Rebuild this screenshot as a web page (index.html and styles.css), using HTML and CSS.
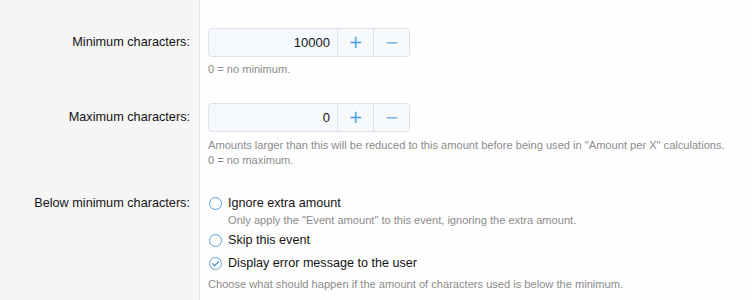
FILE: index.html
```html
<!DOCTYPE html>
<html lang="en">
<head>
    <meta charset="UTF-8">
    <title>Character options</title>
    <link rel="stylesheet" href="styles.css">
</head>
<body>

<div class="form">
    <div class="row row-min">
        <div class="label">Minimum characters:</div>
        <div class="field">
            <div class="spinner">
                <input class="num" type="text" value="10000">
                <button class="spin plus">+</button>
                <button class="spin minus">&minus;</button>
            </div>
            <p class="hint">0 = no minimum.</p>
        </div>
    </div>

    <div class="row row-max">
        <div class="label">Maximum characters:</div>
        <div class="field">
            <div class="spinner">
                <input class="num" type="text" value="0">
                <button class="spin plus">+</button>
                <button class="spin minus">&minus;</button>
            </div>
            <p class="hint long">Amounts larger than this will be reduced to this amount before being used in "Amount per X" calculations.<br>0 = no maximum.</p>
        </div>
    </div>

    <div class="row row-below">
        <div class="label radio-label">Below minimum characters:</div>
        <div class="field">
            <ul class="choices">
                <li class="choice">
                    <span class="radio"></span>Ignore extra amount
                </li>
                <li class="choice-hint">Only apply the "Event amount" to this event, ignoring the extra amount.</li>
                <li class="choice skip">
                    <span class="radio"></span>Skip this event
                </li>
                <li class="choice display">
                    <span class="radio checked">
                        <svg width="9" height="9" viewBox="0 0 9 9"><path d="M1.5 4.6 L3.7 6.7 L7.6 2.4" fill="none" stroke="#4a98d6" stroke-width="1.3" stroke-linecap="round" stroke-linejoin="round"/></svg>
                    </span>Display error message to the user
                </li>
            </ul>
            <p class="hint last">Choose what should happen if the amount of characters used is below the minimum.</p>
        </div>
    </div>
</div>

</body>
</html>
```

FILE: styles.css
```css
body {
    margin: 0;
    font-family: "Liberation Sans", Arial, sans-serif;
    background: #fefefe;
    color: #141414;
    overflow: hidden;
}

.form {
    width: 752px;
}

.row {
    display: flex;
}

.label {
    width: 190px;
    padding-right: 9px;
    flex-shrink: 0;
    text-align: right;
    font-size: 12.7px;
    line-height: 29px;
    background: #f5f5f5;
    border-right: 1px solid #e6e6e6;
}

.field {
    padding-left: 8px;
    flex: 1;
}

.row-min .label,
.row-min .field {
    padding-top: 28px;
    padding-bottom: 14px;
}

.row-max .label,
.row-max .field {
    padding-top: 13px;
    padding-bottom: 13px;
}

.row-below .label,
.row-below .field {
    padding-top: 13px;
    padding-bottom: 12px;
}

.radio-label {
    line-height: 18px;
}

.spinner {
    display: flex;
    width: 202px;
    height: 29px;
    box-sizing: border-box;
    border: 1px solid #dde2e8;
    border-radius: 4px;
    background: #f5f9fd;
    overflow: hidden;
}

.num {
    width: 128px;
    box-sizing: border-box;
    border: none;
    background: transparent;
    padding: 0 7px 0 0;
    text-align: right;
    font-family: "Liberation Sans", Arial, sans-serif;
    font-size: 13px;
    color: #141414;
    outline: none;
}

.spin {
    border: none;
    border-left: 1px solid #dde2e8;
    background: #f7fafd;
    padding: 0;
    font-family: "DejaVu Sans", sans-serif;
    font-size: 17px;
    line-height: 27px;
    color: #3f9fe6;
}

.plus {
    width: 36px;
}

.minus {
    width: 36px;
    color: #7db4e0;
}

.hint {
    margin: 5px 0 0;
    font-size: 11.1px;
    line-height: 14px;
    color: #8c8c8c;
}

.hint.long {
    margin-top: 6px;
    line-height: 15px;
}

.hint.last {
    margin-top: 5px;
}

.choices {
    list-style: none;
    margin: 0;
    padding: 0;
}

.choice {
    display: flex;
    align-items: center;
    font-size: 12.6px;
    line-height: 18px;
}

.choice.skip {
    margin-top: 4px;
}

.choice.display {
    margin-top: 5px;
}

.choice-hint {
    padding-left: 20px;
    margin-top: 1px;
    font-size: 11.1px;
    line-height: 14px;
    color: #8c8c8c;
}

.radio {
    display: inline-flex;
    align-items: center;
    justify-content: center;
    width: 13px;
    height: 13px;
    box-sizing: border-box;
    margin: 0 6px 0 1px;
    border: 1.3px solid #5a9fd6;
    border-radius: 50%;
    background: #fff;
}

.radio svg {
    display: block;
}
```
